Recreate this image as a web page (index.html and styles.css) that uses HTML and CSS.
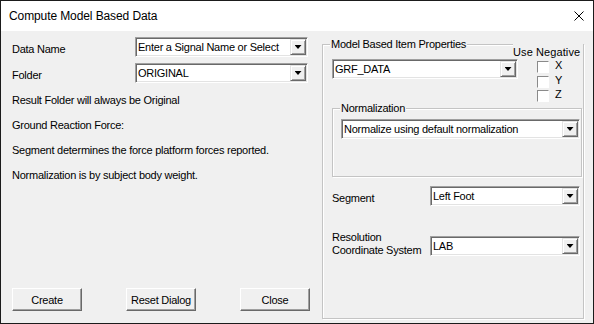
FILE: index.html
```html
<!DOCTYPE html>
<html lang="en">
<head>
  <meta charset="UTF-8">
  <title>Compute Model Based Data</title>
  <link rel="stylesheet" href="styles.css">
</head>
<body>
  <div class="window">
    <div class="titlebar">
      <span class="title">Compute Model Based Data</span>
      <svg class="close-x" width="10" height="10" viewBox="0 0 10 10"><path d="M0.5 0.5L9.5 9.5M9.5 0.5L0.5 9.5" stroke="#000" stroke-width="1" fill="none"/></svg>
    </div>
    <div class="content">
      <div class="left">
        <div class="field-row">
          <span class="label">Data Name</span>
          <div class="combo combo-left"><span class="combo-text">Enter a Signal Name or Select</span><span class="drop"></span></div>
        </div>
        <div class="field-row">
          <span class="label">Folder</span>
          <div class="combo combo-left"><span class="combo-text">ORIGINAL</span><span class="drop"></span></div>
        </div>
        <div class="note first">Result Folder will always be Original</div>
        <div class="note">Ground Reaction Force:</div>
        <div class="note">Segment determines the force platform forces reported.</div>
        <div class="note">Normalization is by subject body weight.</div>
        <div class="buttons">
          <button class="btn">Create</button>
          <button class="btn">Reset Dialog</button>
          <button class="btn">Close</button>
        </div>
      </div>

      <div class="group group-main">
        <span class="group-title">Model Based Item Properties</span>
        <span class="use-negative">Use Negative</span>
        <div class="top-row">
          <div class="combo combo-grf"><span class="combo-text">GRF_DATA</span><span class="drop"></span></div>
          <div class="checks">
            <div class="check-row"><span class="check-box"></span><span class="check-label">X</span></div>
            <div class="check-row"><span class="check-box"></span><span class="check-label">Y</span></div>
            <div class="check-row"><span class="check-box"></span><span class="check-label">Z</span></div>
          </div>
        </div>
        <div class="group group-norm">
          <span class="group-title">Normalization</span>
          <div class="combo combo-norm"><span class="combo-text">Normalize using default normalization</span><span class="drop"></span></div>
        </div>
        <div class="field-row seg-row">
          <span class="label label-right">Segment</span>
          <div class="combo combo-right"><span class="combo-text">Left Foot</span><span class="drop"></span></div>
        </div>
        <div class="field-row res-row">
          <span class="label label-right label-two">Resolution<br>Coordinate System</span>
          <div class="combo combo-right"><span class="combo-text">LAB</span><span class="drop"></span></div>
        </div>
      </div>
    </div>
  </div>
</body>
</html>
```

FILE: styles.css
```css
body { margin:0; font-family:"Liberation Sans", Arial, sans-serif; font-size:11px; letter-spacing:-0.25px; color:#000; background:#fff; }
.window { width:594px; height:324px; box-sizing:border-box; border:1px solid #1b1b1b; display:flex; flex-direction:column; }

/* title bar */
.titlebar { height:30px; flex:none; background:#fff; display:flex; align-items:center; padding:0 9px 0 8px; }
.title { flex:1; font-size:12px; letter-spacing:-0.1px; line-height:30px; }
.close-x { display:block; }

.content { flex:1; background:#f0f0f0; display:flex; }

/* left column */
.left { width:321px; flex:none; box-sizing:border-box; padding:6px 0 12px 11px; display:flex; flex-direction:column; }
.field-row { display:flex; align-items:flex-start; }
.field-row + .field-row { margin-top:6px; }
.label { width:123px; flex:none; padding-top:6px; line-height:13px; }
.note { line-height:13px; margin-top:12px; white-space:nowrap; }
.note.first { margin-top:11px; }
.buttons { margin-top:auto; display:flex; gap:44px; }
.btn { width:70px; height:23px; box-sizing:border-box; padding:0; border:1px solid; border-color:#fff #696969 #696969 #fff; box-shadow:inset -1px -1px #a0a0a0; background:#f0f0f0; color:#000; font:inherit; letter-spacing:inherit; text-align:center; }

/* combo boxes */
.combo { height:20px; box-sizing:border-box; border:1px solid; border-color:#a0a0a0 #fff #fff #a0a0a0; padding:1px; box-shadow:inset 1px 1px #696969, inset -1px -1px #e3e3e3; background:#fff; display:flex; }
.combo-text { flex:1; padding:1px 0 0 1px; line-height:15px; white-space:nowrap; overflow:hidden; }
.drop { width:16px; height:16px; flex:none; box-sizing:border-box; border:1px solid; border-color:#e3e3e3 #696969 #696969 #e3e3e3; box-shadow:inset 1px 1px #fff, inset -1px -1px #a0a0a0; background:#f0f0f0; display:flex; align-items:center; justify-content:center; }
.drop::after { content:""; width:7px; height:4px; background:#000; clip-path:polygon(0 0, 100% 0, 50% 100%); }
.combo-left { width:173px; }
.combo-grf { width:186px; flex:none; }
.combo-norm { width:239px; }
.combo-right { width:150px; }

/* group boxes */
.group { position:relative; box-sizing:border-box; border:1px solid #c4c4c4; box-shadow:inset 1px 1px #fff, 1px 1px #fff; }
.group-title { position:absolute; top:-7px; left:7px; padding:0 1px; background:#f0f0f0; line-height:13px; white-space:nowrap; }
.group-main { margin-top:13px; width:262px; height:275px; padding:14px 0 0 9px; }
.use-negative { position:absolute; top:-1px; left:190px; right:0; padding-top:2px; background:#f0f0f0; line-height:13px; letter-spacing:0.1px; white-space:nowrap; }
.top-row { display:flex; align-items:flex-start; height:49px; }
.checks { flex:none; width:40px; margin-left:19px; }
.check-row { display:flex; align-items:flex-start; height:14.5px; }
.check-box { flex:none; width:12px; height:12px; margin-top:2px; box-sizing:border-box; border:1px solid; border-color:#8a8a8a #fff #fff #8a8a8a; background:#fff; }
.check-label { margin-left:6px; line-height:13px; }
.group-norm { width:250px; height:69px; padding:10px 0 0 8px; }
.label-right { width:98px; }
.seg-row { margin-top:9px; }
.field-row.res-row { margin-top:30px; }
.label-two { padding-top:0; margin-top:-5px; }
```
